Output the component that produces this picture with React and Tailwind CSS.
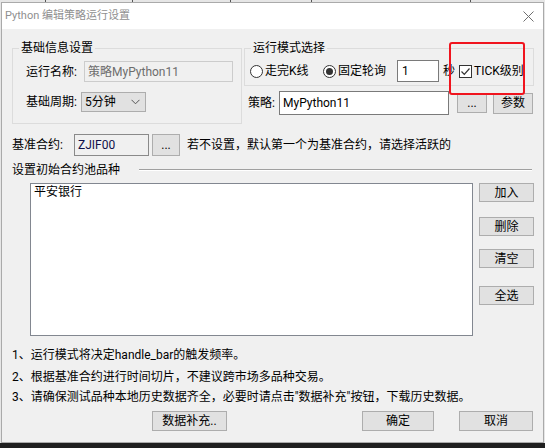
import React from "react";

const Btn = ({ className = "", children }) => (
  <div className={"flex items-center justify-center bg-[#e1e1e1] border border-[#adadad] shrink-0 " + className}>
    {children}
  </div>
);

const Radio = ({ checked }) => (
  <span className="w-[13px] h-[13px] rounded-full border border-[#333333] bg-white flex items-center justify-center shrink-0">
    {checked && <span className="w-[7px] h-[7px] rounded-full bg-[#333333]" />}
  </span>
);

const Check = () => (
  <span className="w-[13px] h-[13px] border border-[#333333] bg-white flex items-center justify-center shrink-0">
    <svg width="11" height="11" viewBox="0 0 11 11" fill="none">
      <path d="M1.5 5.5 L4.3 8.3 L9.5 2.5" stroke="#333333" strokeWidth="1.2" />
    </svg>
  </span>
);

export default function App() {
  return (
    <div className="relative w-[545px] h-[448px] overflow-hidden bg-[#e6e6e6] font-['Roboto','Noto_Sans_CJK_SC',sans-serif] text-[12px] leading-[14px] text-black flex flex-col">
      {/* whatever sits behind the dialog */}
      <div className="h-[2px] shrink-0 flex">
        <span className="ml-[45px] w-[1px] bg-[#555]" />
        <span className="ml-[86px] w-[1px] bg-[#555]" />
        <span className="ml-[97px] w-[1px] bg-[#555]" />
        <span className="ml-[80px] w-[1px] bg-[#555]" />
        <span className="ml-[158px] w-[1px] bg-[#555]" />
      </div>

      <div className="ml-[1px] w-[543px] h-[441px] shrink-0 border border-[#aaaaaa] bg-[#f0f0f0] flex flex-col">
        {/* title bar */}
        <div className="h-[26px] bg-white flex items-center shrink-0">
          <span className="pl-[3px] text-[11px] text-[#8f8f8f]">Python 编辑策略运行设置</span>
          <svg className="ml-auto mr-[9px]" width="11" height="11" viewBox="0 0 11 11">
            <path d="M0.5 0.5 L10.5 10.5 M10.5 0.5 L0.5 10.5" stroke="#6f6f6f" strokeWidth="1" />
          </svg>
        </div>

        <div className="pl-[10px] flex flex-col">
          {/* group boxes */}
          <div className="mt-[12px] flex items-start">
            <fieldset className="w-[230px] h-[83px] border border-[#dcdcdc] shrink-0">
              <legend className="ml-[6px] px-[2px] leading-[14px]">基础信息设置</legend>
              <div className="mt-[6px] flex items-center h-[21px]">
                <span className="w-[64px] text-right">运行名称:</span>
                <div className="ml-[7px] w-[149px] h-[21px] border border-[#cccccc] bg-[#f0f0f0] flex items-center pl-[3px] text-[#6d6d6d]">
                  策略MyPython11
                </div>
              </div>
              <div className="mt-[10px] flex items-center h-[20px]">
                <span className="w-[64px] text-right">基础周期:</span>
                <div className="ml-[4px] w-[65px] h-[20px] border border-[#adadad] bg-[#e1e1e1] flex items-center justify-between pl-[3px] pr-[5px]">
                  <span>5分钟</span>
                  <svg width="9" height="6" viewBox="0 0 9 6" fill="none">
                    <path d="M0.5 0.8 L4.5 4.8 L8.5 0.8" stroke="#555555" strokeWidth="1" />
                  </svg>
                </div>
              </div>
            </fieldset>

            <div className="ml-[2px] flex flex-col">
              <fieldset className="w-[290px] h-[45px] border border-[#dcdcdc]">
                <legend className="ml-[6px] px-[2px] leading-[14px]">运行模式选择</legend>
                <div className="mt-[5px] flex items-center h-[22px] pl-[5px]">
                  <span className="w-[73px] flex items-center shrink-0">
                    <Radio />
                    <span className="ml-[2px]">走完K线</span>
                  </span>
                  <span className="w-[74px] flex items-center shrink-0">
                    <Radio checked />
                    <span className="ml-[2px]">固定轮询</span>
                  </span>
                  <div className="w-[42px] h-[22px] border border-[#7a7a7a] bg-white flex items-center pl-[4px] shrink-0">1</div>
                  <span className="ml-[4px]">秒</span>
                  <span className="ml-[4px]"><Check /></span>
                  <span className="ml-[2px]">TICK级别</span>
                </div>
              </fieldset>
              <div className="mt-[5px] flex items-center h-[24px] pl-[4px]">
                <span className="w-[31px] shrink-0">策略:</span>
                <div className="w-[170px] h-[24px] border border-[#7a7a7a] bg-white flex items-center pl-[3px] shrink-0">MyPython11</div>
                <Btn className="ml-[8px] w-[30px] h-[20px]">...</Btn>
                <Btn className="ml-[6px] w-[40px] h-[21px]">参数</Btn>
              </div>
            </div>
          </div>

          {/* base contract */}
          <div className="mt-[10px] flex items-center h-[22px]">
            <span className="w-[62px] shrink-0">基准合约:</span>
            <div className="w-[75px] h-[22px] border border-[#8a8a8a] bg-[#f0f0f0] flex items-center pl-[3px] text-[#10104a] shrink-0">ZJIF00</div>
            <Btn className="ml-[3px] w-[28px] h-[22px]">...</Btn>
            <span className="ml-[7px]">若不设置，默认第一个为基准合约，请选择活跃的</span>
          </div>

          {/* pool header */}
          <div className="mt-[7px] flex items-center h-[14px]">
            <span className="w-[108px] shrink-0">设置初始合约池品种</span>
            <div className="ml-[19px] w-[393px] h-[2px] border-t border-b border-t-[#a0a0a0] border-b-white" />
          </div>

          {/* pool list */}
          <div className="mt-[6px] flex items-start">
            <div className="ml-[18px] w-[443px] h-[153px] border border-[#828790] bg-white pt-[1px] pl-[3px] shrink-0">
              平安银行
            </div>
            <div className="ml-[6px] flex flex-col">
              <Btn className="w-[55px] h-[19px]">加入</Btn>
              <Btn className="mt-[15px] w-[55px] h-[19px]">删除</Btn>
              <Btn className="mt-[13px] w-[55px] h-[19px]">清空</Btn>
              <Btn className="mt-[18px] w-[55px] h-[19px]">全选</Btn>
            </div>
          </div>

          {/* notes */}
          <p className="mt-[12px]">1、运行模式将决定handle_bar的触发频率。</p>
          <p className="mt-[8px]">2、根据基准合约进行时间切片，不建议跨市场多品种交易。</p>
          <p className="mt-[6px]">3、请确保测试品种本地历史数据齐全，必要时请点击"数据补充"按钮，下载历史数据。</p>

          {/* bottom buttons */}
          <div className="mt-[7px] flex items-center h-[20px]">
            <Btn className="ml-[140px] w-[75px] h-[20px]">数据补充..</Btn>
            <Btn className="ml-[135px] w-[72px] h-[20px]">确定</Btn>
            <Btn className="ml-[25px] w-[74px] h-[20px]">取消</Btn>
          </div>
        </div>
      </div>

      <div className="flex-1 bg-[#1f1f1f]" />

      {/* red highlight drawn over the dialog */}
      <div className="absolute left-[449px] top-[42px] w-[76px] h-[53px] border-2 border-[#f0141e] rounded-[3px] pointer-events-none" />
    </div>
  );
}
